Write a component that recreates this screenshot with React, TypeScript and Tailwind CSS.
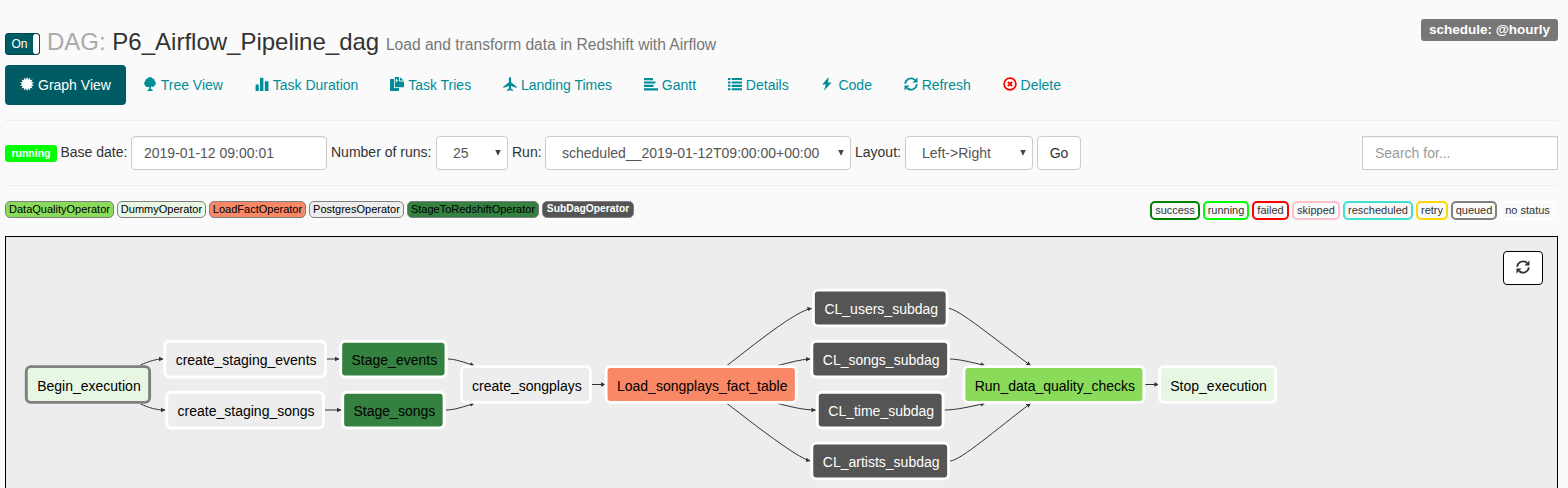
import React from "react";

type IconProps = { className?: string };

const Svg = ({ children, className = "" }: { children: React.ReactNode; className?: string }) => (
  <svg viewBox="0 0 14 14" className={"h-3.5 w-3.5 shrink-0 " + className} fill="currentColor" aria-hidden="true">
    {children}
  </svg>
);

const burst = Array.from({ length: 28 }, (_, i) => {
  const r = i % 2 ? 4.7 : 7.3;
  const a = (i * Math.PI) / 14;
  return `${(7 + r * Math.sin(a)).toFixed(2)},${(7 - r * Math.cos(a)).toFixed(2)}`;
}).join(" ");

const CertificateIcon = () => (
  <Svg className="overflow-visible"><polygon points={burst} /></Svg>
);
const TreeIcon = () => (
  <Svg><path d="M7 0a2.600 2.600 0 0 1 2.500 1.600 2.300 2.300 0 0 1 2.100 2.500 2.300 2.300 0 0 1 .600 3.600A2.600 2.600 0 0 1 8.600 9.600L8 9.500V12l1.700 1v1H4.500v-1L6.200 12V9.500A2.700 2.700 0 0 1 1.900 7.900 2.300 2.300 0 0 1 2.300 4.200 2.400 2.400 0 0 1 4.500 1.600 2.700 2.700 0 0 1 7 0z" /></Svg>
);
const StatsIcon = () => (
  <Svg><path d="M.6 8q0-.5.5-.5h2.200q.5 0 .5.500V14H.6zM5 1.300q0-.5.500-.5h2.400q.5 0 .5.500V14H5zM9.800 4.700q0-.5.500-.5h2.700q.5 0 .5.500V14H9.800z" /></Svg>
);
const DuplicateIcon = () => (
  <Svg>
    <path d="M.5 2H4v8.500q0 .5.500.500H9v2.500q0 .500-.500.500H.5q-.5 0-.5-.500v-11Q0 2 .500 2z" />
    <path d="M5.300 0H9v3.800q0 .700.700.700H14v5.200q0 .500-.500.500H5.300q-.500 0-.500-.500V.500q0-.500.500-.500zM10 0.200 13.700 3.600H10z" />
    <path d="M5.900 1.500 8 3.600 5.900 5.500z" fill="#fafafa" />
  </Svg>
);
const PlaneIcon = () => (
  <Svg><path d="M7 0c.7 0 1.100.8 1.100 1.800v3.400l5.600 4.500V11L8.100 9v2.600l2 1.500v.8L7 13.200l-3.100.7v-.8l2-1.500V9L.3 11V9.700l5.600-4.500V1.800C5.900.8 6.300 0 7 0z" /></Svg>
);
const GanttIcon = () => (
  <Svg><path d="M0 1h9v2.200H0zM0 4.400h11.500v2.200H0zM0 7.800h9.500V10H0zM0 11.200h14v2.300H0z" /></Svg>
);
const ListIcon = () => (
  <Svg><path d="M0 1h2.500v2H0zM3.700 1H14v2.100H3.700zM0 4.400h2.500v2H0zM3.700 4.400H14v2.100H3.700zM0 7.800h2.500v2H0zM3.700 7.800H14v2.100H3.700zM0 11.200h2.500v2H0zM3.700 11.200H14v2.100H3.700z" /></Svg>
);
const FlashIcon = () => (
  <Svg><path d="M8.600 0 2.200 7.500h3.600L4 13.800l7.600-8.200H8z" /></Svg>
);
const RefreshIcon = ({ className }: IconProps) => (
  <Svg className={className}>
    <path d="M1.200 6.800A5.800 5.800 0 0 1 11 3" fill="none" stroke="currentColor" strokeWidth="1.800" />
    <path d="M13.500.4v5H8.400z" />
    <path d="M12.800 7.200A5.800 5.800 0 0 1 3 11" fill="none" stroke="currentColor" strokeWidth="1.800" />
    <path d="M.5 13.600v-5h5.100z" />
  </Svg>
);
const RemoveIcon = () => (
  <Svg className="text-[#ff0000]">
    <circle cx="7" cy="7" r="5.900" fill="none" stroke="currentColor" strokeWidth="1.700" />
    <path d="m4.900 4.900 4.200 4.200M9.100 4.900 4.900 9.100" stroke="currentColor" strokeWidth="2" />
  </Svg>
);

const tabs = [
  { label: "Graph View", icon: <CertificateIcon />, active: true },
  { label: "Tree View", icon: <TreeIcon /> },
  { label: "Task Duration", icon: <StatsIcon /> },
  { label: "Task Tries", icon: <DuplicateIcon /> },
  { label: "Landing Times", icon: <PlaneIcon /> },
  { label: "Gantt", icon: <GanttIcon /> },
  { label: "Details", icon: <ListIcon /> },
  { label: "Code", icon: <FlashIcon /> },
  { label: "Refresh", icon: <RefreshIcon /> },
  { label: "Delete", icon: <RemoveIcon /> },
];

const operators = [
  { label: "DataQualityOperator", style: "w-[109px] bg-[#8bdb5b] text-black" },
  { label: "DummyOperator", style: "w-[89px] bg-[#e8f7e4] text-black" },
  { label: "LoadFactOperator", style: "w-[97px] bg-[#f98866] text-black" },
  { label: "PostgresOperator", style: "w-[95px] bg-[#ededed] text-black" },
  { label: "StageToRedshiftOperator", style: "w-[132px] bg-[#358140] text-black" },
  { label: "SubDagOperator", style: "w-[92px] bg-[#555] text-[10.300px] font-bold text-white" },
];

const states = [
  { label: "success", style: "w-[50px] border-[#008000]" },
  { label: "running", style: "w-[46px] border-[#00ff00]" },
  { label: "failed", style: "w-[37px] border-[#ff0000]" },
  { label: "skipped", style: "w-[48px] border-[#ffc0cb]" },
  { label: "rescheduled", style: "w-[70px] border-[#40e0d0]" },
  { label: "retry", style: "w-[32px] border-[#ffd700]" },
  { label: "queued", style: "w-[46px] border-[#808080]" },
  { label: "no status", style: "w-[55px] border-white" },
];

type Node = { id: string; x: number; y: number; w: number; fill: string; text?: string; stroke?: string };

const nodes: Node[] = [
  { id: "Begin_execution", x: 26.3, y: 366.6, w: 123.3, fill: "#e8f7e4", stroke: "#808080" },
  { id: "create_staging_events", x: 164.8, y: 341.2, w: 160.6, fill: "#ededed" },
  { id: "create_staging_songs", x: 166.8, y: 392.2, w: 156.6, fill: "#ededed" },
  { id: "Stage_events", x: 340.7, y: 341.2, w: 105.3, fill: "#358140" },
  { id: "Stage_songs", x: 342.7, y: 392.2, w: 101.4, fill: "#358140" },
  { id: "create_songplays", x: 461.4, y: 366.6, w: 129, fill: "#ededed" },
  { id: "Load_songplays_fact_table", x: 606.1, y: 366.6, w: 190.2, fill: "#f98866" },
  { id: "CL_users_subdag", x: 813.4, y: 290.1, w: 133.7, fill: "#555", text: "#fff" },
  { id: "CL_songs_subdag", x: 811.8, y: 341.2, w: 136.8, fill: "#555", text: "#fff" },
  { id: "CL_time_subdag", x: 817.3, y: 392.2, w: 125.8, fill: "#555", text: "#fff" },
  { id: "CL_artists_subdag", x: 811.8, y: 443.1, w: 136.8, fill: "#555", text: "#fff" },
  { id: "Run_data_quality_checks", x: 963.9, y: 366.6, w: 180, fill: "#8bdb5b" },
  { id: "Stop_execution", x: 1159.4, y: 366.6, w: 116.3, fill: "#e8f7e4" },
];

const edges = [
  "M140.500 365C149 361.300 156 359 163 359",
  "M140.500 404C149 407.700 156 410 165 410",
  "M327 359H339",
  "M325 410H341",
  "M448 359C455 359 464 362.300 474 365.500",
  "M446 410C454 410 463 407 474 403.500",
  "M592 384.500H605",
  "M727 365.500C755 344 796 310.500 811.500 308.500",
  "M778 365.500C790 362.500 801 359.300 810 359",
  "M778 403.500C790 406.500 803 410 815.500 410",
  "M727 403.500C755 425 796 457 810 461",
  "M949 308.500C958 308.500 996 340 1030.500 365.500",
  "M950 359C958 359 973 362.500 984.500 365.500",
  "M944.500 410C956 410 971 406.500 984.500 403.500",
  "M950 461C960 461 998 428 1030.500 403.500",
  "M1145 384.500H1158.500",
];

const Graph = () => (
  <svg viewBox="6 237 1551 251" className="block h-[251px] w-[1551px]">
    <defs>
      <marker id="arrow" viewBox="0 0 10 10" refX="9" refY="5" markerUnits="userSpaceOnUse" markerWidth="4.500" markerHeight="5.500" orient="auto">
        <path d="M0 0 10 5 0 10z" fill="#333" />
      </marker>
    </defs>
    {edges.map((d) => (
      <path key={d} d={d} fill="none" stroke="#333" strokeWidth="1" markerEnd="url(#arrow)" />
    ))}
    {nodes.map((n) => (
      <g key={n.id}>
        <rect x={n.x} y={n.y} width={n.w} height={35.8} rx="4.500" fill={n.fill} stroke={n.stroke ?? "#fff"} strokeWidth="2.900" />
        <text
          x={n.x + n.w / 2 + 1}
          y={Math.round(n.y + 24)}
          textAnchor="middle"
          fontSize="14"
          fill={n.text ?? "#000"}
        >
          {n.id}
        </text>
      </g>
    ))}
  </svg>
);

const Select = ({ value, style }: { value: string; style: string }) => (
  <button className={"flex h-[34px] items-center justify-between rounded border border-[#ccc] bg-white pl-4 pr-1.5 text-[#555] " + style}>
    <span>{value}</span>
    <svg viewBox="0 0 7 7" className="h-1.5 w-1.5" fill="#444">
      <path d="M.3 0h6.400L3.500 6.800z" />
    </svg>
  </button>
);

export default function App() {
  return (
    <div className="h-[488px] w-[1568px] overflow-hidden bg-[#fafafa] pl-[5px] pr-2.5 font-['Liberation_Sans',Arial,sans-serif] text-sm leading-5 text-[#333]">
      <header className="flex h-[65px] items-start justify-between">
        <div className="flex items-start pt-[27px]">
          <div className="mt-1.5 flex h-[22px] w-[35px] items-center rounded-[3px] border border-[#00464b] bg-[#005c64] text-[12px] text-white">
            <span className="w-[27px] text-center">On</span>
            <span className="h-full w-1.5 rounded-[3px] bg-white" />
          </div>
          <h3 className="ml-[7px] whitespace-nowrap text-2xl leading-[30px]">
            <span className="text-[#aaa]">DAG:</span> <span>P6_Airflow_Pipeline_dag</span>{" "}
            <small className="text-[15.600px] text-[#777]">Load and transform data in Redshift with Airflow</small>
          </h3>
        </div>
        <span className="mt-[19px] flex h-[22px] w-[137px] items-center justify-center rounded-[3px] bg-[#777] pb-px text-[13.500px] font-bold text-white">
          schedule: @hourly
        </span>
      </header>

      <nav className="flex h-10 gap-[1.800px]">
        {tabs.map((t) => (
          <a
            key={t.label}
            className={
              "flex items-center gap-1 whitespace-nowrap rounded px-[15px] " +
              (t.active ? "bg-[#005c64] text-white" : "text-[#018d97]")
            }
          >
            <span className="-mt-0.5">{t.icon}</span>
            {t.label}
          </a>
        ))}
      </nav>

      <div className="mt-[15px] flex h-[66px] items-center justify-between border-y border-[#eee]">
        <form className="flex items-center">
          <span className="flex h-[17px] w-[52px] items-center justify-center rounded-[3px] bg-[#00ff00] text-[10.500px] font-bold text-white">
            running
          </span>
          <label className="w-[74px] whitespace-nowrap pb-0.5 pl-[3.500px]">Base date:</label>
          <input
            defaultValue="2019-01-12 09:00:01"
            className="h-[34px] w-[196px] rounded border border-[#ccc] bg-white px-3 text-[#555] shadow-[inset_0_1px_1px_rgba(0,0,0,0.075)]"
          />
          <label className="w-[109px] whitespace-nowrap pb-0.5 pl-1">Number of runs:</label>
          <Select value="25" style="w-[72px]" />
          <label className="w-[37px] pb-0.5 pl-1">Run:</label>
          <Select value="scheduled__2019-01-12T09:00:00+00:00" style="w-[306px]" />
          <label className="w-[54px] pb-0.5 pl-1">Layout:</label>
          <Select value="Left->Right" style="w-[128px]" />
          <button className="ml-1 h-[34px] w-11 rounded border border-[#ccc] bg-white">Go</button>
        </form>
        <input
          placeholder="Search for..."
          className="h-[34px] w-[196px] border border-[#ccc] bg-white px-3 shadow-[inset_0_1px_1px_rgba(0,0,0,0.075)] placeholder:text-[#999]"
        />
      </div>

      <div className="flex h-[50px] justify-between pt-[15px] text-[11px]">
        <div className="flex gap-[3px]">
          {operators.map((o) => (
            <span
              key={o.label}
              className={"flex h-[17px] items-center justify-center rounded-[5px] border border-[#808080] pb-0.5 " + o.style}
            >
              {o.label}
            </span>
          ))}
        </div>
        <div className="flex gap-[3px] pr-[3px]">
          {states.map((s) => (
            <span
              key={s.label}
              className={"flex h-[19px] items-center justify-center whitespace-nowrap rounded-[5px] border-2 pb-0.5 " + s.style}
            >
              {s.label}
            </span>
          ))}
        </div>
      </div>

      <main className="relative h-[260px] border border-black bg-[#ededed]">
        <Graph />
        <button className="absolute right-3.5 top-3.5 flex h-[34px] w-10 items-center justify-center rounded border border-black bg-white pb-0.5">
          <RefreshIcon />
        </button>
      </main>
    </div>
  );
}
